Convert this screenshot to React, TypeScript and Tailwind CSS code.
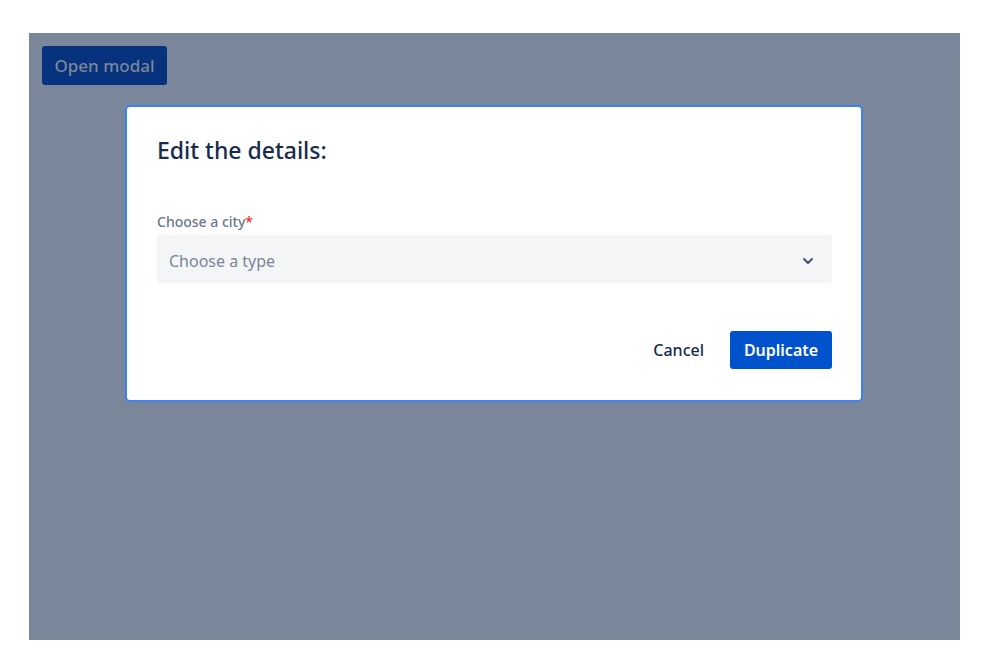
import { ChevronDown } from "lucide-react";

export default function App() {
  return (
    <div className="min-h-screen bg-white pl-[29px] pt-[33px] font-['Noto_Sans',sans-serif]">
      <div className="relative h-[607px] w-[931px] bg-[#7a8699]">
        <div className="p-[13px]">
          <button className="h-[39px] w-[125px] rounded-[3px] bg-[#07327d] text-[17px] font-medium text-[#7a8699]">
            Open modal
          </button>
        </div>

        <div className="absolute left-[96px] top-[72px] w-[738px] rounded-[5px] border-2 border-[#3b82f6] bg-white pb-[31px] pl-[30px] pr-[29px] pt-[29px]">
          <h2 className="text-[23px] font-medium leading-[28px] text-[#172b4d]">Edit the details:</h2>

          <div className="mt-[49px]">
            <label className="block text-[14px] font-medium leading-[18px] text-[#6b778c]">
              Choose a city<span className="text-[#ef2b2b]">*</span>
            </label>
            <div className="mt-[4px] flex h-[48px] items-center justify-between rounded-[3px] bg-[#f4f5f7] pl-[12px] pr-[16px] pt-[3px]">
              <span className="text-[16px] text-[#7a869a]">Choose a type</span>
              <ChevronDown className="h-4 w-4 text-[#42526e]" strokeWidth={3} />
            </div>
          </div>

          <div className="mt-[48px] flex items-center justify-end gap-[26px]">
            <button className="text-[16px] font-medium text-[#172b4d]">Cancel</button>
            <button className="h-[38px] w-[102px] rounded-[3px] bg-[#0052cc] text-[16px] font-semibold text-white">
              Duplicate
            </button>
          </div>
        </div>
      </div>
    </div>
  );
}
